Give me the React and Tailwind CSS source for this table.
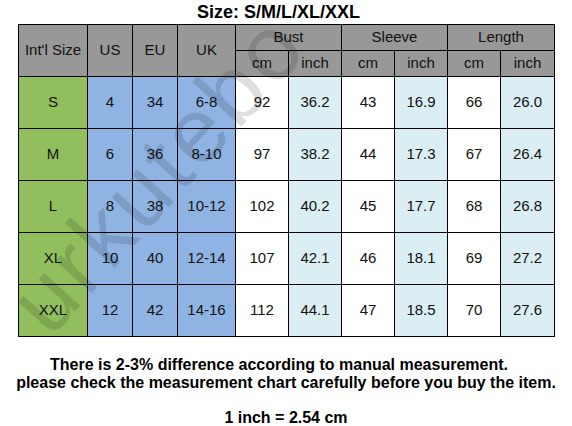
import React from 'react';

const rows = [
  { size: 'S', us: '4', eu: '34', uk: '6-8', bust: ['92', '36.2'], sleeve: ['43', '16.9'], length: ['66', '26.0'] },
  { size: 'M', us: '6', eu: '36', uk: '8-10', bust: ['97', '38.2'], sleeve: ['44', '17.3'], length: ['67', '26.4'] },
  { size: 'L', us: '8', eu: '38', uk: '10-12', bust: ['102', '40.2'], sleeve: ['45', '17.7'], length: ['68', '26.8'] },
  { size: 'XL', us: '10', eu: '40', uk: '12-14', bust: ['107', '42.1'], sleeve: ['46', '18.1'], length: ['69', '27.2'] },
  { size: 'XXL', us: '12', eu: '42', uk: '14-16', bust: ['112', '44.1'], sleeve: ['47', '18.5'], length: ['70', '27.6'] },
];

const head = 'border border-black bg-[#989898] font-normal p-0 text-center';
const cell = 'border border-black p-0 text-center';

function App() {
  return (
    <div className="relative w-[572px] h-[426px] bg-white text-[#111] font-['Liberation_Sans',Arial,sans-serif] overflow-hidden">
      <h1 className="h-[24px] text-center pr-[15px] text-[18px] leading-[24px] font-bold text-black">
        Size: S/M/L/XL/XXL
      </h1>

      <table className="ml-[18px] w-[536px] table-fixed border-collapse text-[15px]">
        <colgroup>
          <col className="w-[69px]" />
          <col className="w-[45px]" />
          <col className="w-[45px]" />
          <col className="w-[58px]" />
          <col className="w-[53px]" />
          <col className="w-[53px]" />
          <col className="w-[53px]" />
          <col className="w-[53px]" />
          <col className="w-[53px]" />
          <col className="w-[54px]" />
        </colgroup>
        <thead>
          <tr className="h-[26px]">
            <th rowSpan={2} className={head}>Int'l Size</th>
            <th rowSpan={2} className={head}>US</th>
            <th rowSpan={2} className={head}>EU</th>
            <th rowSpan={2} className={head}>UK</th>
            <th colSpan={2} className={head}>Bust</th>
            <th colSpan={2} className={head}>Sleeve</th>
            <th colSpan={2} className={head}>Length</th>
          </tr>
          <tr className="h-[26px]">
            <th className={head}>cm</th>
            <th className={head}>inch</th>
            <th className={head}>cm</th>
            <th className={head}>inch</th>
            <th className={head}>cm</th>
            <th className={head}>inch</th>
          </tr>
        </thead>
        <tbody>
          {rows.map((r) => (
            <tr key={r.size} className="h-[52px]">
              <td className={`${cell} bg-[#91bf5e]`}>{r.size}</td>
              <td className={`${cell} bg-[#8fb4e3]`}>{r.us}</td>
              <td className={`${cell} bg-[#8fb4e3]`}>{r.eu}</td>
              <td className={`${cell} bg-[#8fb4e3]`}>{r.uk}</td>
              <td className={`${cell} bg-white`}>{r.bust[0]}</td>
              <td className={`${cell} bg-[#dbeef3]`}>{r.bust[1]}</td>
              <td className={`${cell} bg-white`}>{r.sleeve[0]}</td>
              <td className={`${cell} bg-[#dbeef3]`}>{r.sleeve[1]}</td>
              <td className={`${cell} bg-white`}>{r.length[0]}</td>
              <td className={`${cell} bg-[#dbeef3]`}>{r.length[1]}</td>
            </tr>
          ))}
        </tbody>
      </table>

      <div className="mt-[19px] text-center text-[16px] leading-[18px] font-bold text-black">
        <p className="pr-[14px]">There is 2-3% difference according to manual measurement.</p>
        <p>please check the measurement chart carefully before you buy the item.</p>
        <p className="mt-[17px]">1 inch = 2.54 cm</p>
      </div>

      {/* watermark */}
      <span className="pointer-events-none absolute left-[48px] top-[262px] origin-[0_75px] rotate-[-48deg] text-[92px] tracking-[4px] leading-none text-[rgba(0,0,0,0.13)] whitespace-nowrap select-none">
        urkutebo
      </span>
    </div>
  );
}

export default App;
